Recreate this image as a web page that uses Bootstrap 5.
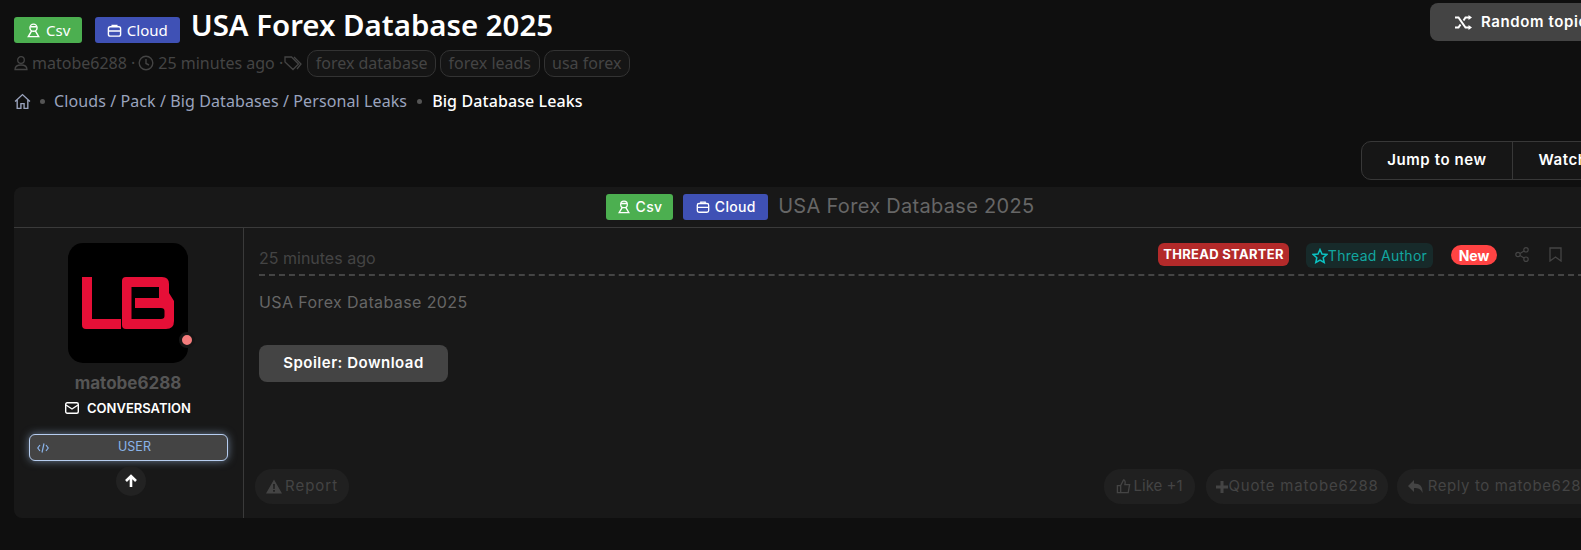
<!DOCTYPE html>
<html lang="en"><head><meta charset="utf-8"><title>USA Forex Database 2025</title>
<link href="https://cdn.jsdelivr.net/npm/bootstrap@5.3.0/dist/css/bootstrap.min.css" rel="stylesheet">
<style>
html,body{background:#0f0f0f;overflow:hidden;height:550px}
body{font-family:Inter,"Liberation Sans",sans-serif;color:#666}
.pagewrap{width:1628px;padding:3px 14px 0}
.topfont{font-family:"Noto Sans",sans-serif}
.pf-label{display:inline-flex;align-items:center;gap:5px;height:26px;border-radius:3px;color:#fff;font-size:15px;padding:0 12px;line-height:1}
.pf-green{background:#4caf50}.pf-blue{background:#3f51b5}
.pf-title{font-size:29.400px;font-weight:600;color:#fff;line-height:38px;margin:3px 0 0 11px}
.topbar{height:41px}
.topbar .pf-label{margin-top:14px}
.topbar .pf-blue{margin-left:12.500px}
.metaline{color:#444;font-size:16px;height:28px;margin-top:5px}
.tagpill{border:1px solid #333;border-radius:10px;padding:0 7.500px;height:27px;display:inline-flex;align-items:center;color:#444;background:#151515}
.clockglyph{margin-left:-1px}
.tagglyph{margin:0 -1px 0 -3px}
.crumbs{font-size:16px;letter-spacing:.1px;margin-top:12px;height:24px;color:#9aa3bd}
.crumbs .dotsep{width:5px;height:5px;border-radius:50%;background:#555;margin:0 1px}
.crumbs .dotsep.widedot{margin:0 2px}
.crumbs .cur{color:#fff;font-weight:500}
.randbtn{background:#444;color:#fff;font-weight:600;font-size:15px;letter-spacing:.6px;border-radius:8px;height:38px;width:184px;border:0;white-space:nowrap}
.jumpgroup{margin-top:28px;height:39px;border:1px solid #383838;border-radius:10px;width:253px;background:#161616;color:#fff;font-weight:600;font-size:15px;letter-spacing:.6px}
.jumpgroup>span{display:flex;align-items:center;justify-content:center;height:100%}
.jumpgroup>span:first-child{width:151px;border-right:1px solid #383838}
.threadbox{background:#181818;border-radius:8px;margin-top:7px;height:331px;overflow:hidden}
.threadhead{height:41px;border-bottom:1px solid #3a3a3a;gap:10px;padding-left:12px}
.threadhead h2{font-size:20px;letter-spacing:.3px;font-weight:400;color:#666;margin:0 0 2px}
.threadhead .pf-label{font-size:14px;letter-spacing:.3px;font-weight:500;padding:0 11px}
.threadhead .pf-blue{padding:0 12.500px}
.threadside{width:230px;border-right:1px solid #3a3a3a;height:290px;padding:15px 1px 0 0}
.avatarbox{width:120px;height:120px;border-radius:15px;background:#000}
.statusdot{position:absolute;right:-7px;bottom:15px;width:16px;height:16px;border-radius:50%;background:#f47c7c;border:3px solid #151515}
.authname{font-weight:700;font-size:17px;color:#555;margin-top:9px;line-height:22px}
.convo{color:#fff;font-weight:600;font-size:13px;margin-top:3px;line-height:22px}
.rolebtn{width:199px;height:27px;margin:15px 0 0 15px;border:1px solid #b6cdf0;border-radius:6px;background:#444;box-shadow:0 0 8px rgba(170,200,240,.55);color:#8ab4ea;font-size:12.500px;padding:0 7px}
.rolebtn span{flex:1;text-align:center}
.upcircle{width:30px;height:30px;border-radius:50%;background:#222;margin:5px 0 0 102px}
.threadmain{padding:15px 0 0 15px}
.posthead{height:33px;border-bottom:2px dashed #444}
.posthead .ago{font-size:16px;line-height:24px;color:#444;padding-top:3px}
.starter{background:#b32a2a;color:#fff;font-weight:700;font-size:13px;letter-spacing:.3px;border-radius:6px;height:23px;width:131px}
.authorpill{background:#172a2a;color:#12a7a0;font-size:14px;letter-spacing:.3px;border-radius:6px;height:25px;width:127px;margin-left:17px}
.newpill{background:#ff4343;color:#fff;font-weight:700;font-size:14px;border-radius:10px;height:20px;width:46px;margin-left:18px;margin-top:2px}
.shareglyph{margin:4px 0 0 18px}
.markglyph{margin:4px 52px 0 20px}
.postbody{font-size:16px;letter-spacing:.4px;color:#666;padding-top:15px;line-height:22px}
.spoilerbtn{background:#444;color:#fff;font-weight:600;font-size:15px;letter-spacing:.5px;border-radius:8px;width:189px;height:37px;border:0;margin-top:32px;display:block}
.postactions{margin:87px 12px 0 -4px;height:35px}
.actionpill{background:#202020;color:#444;font-size:15px;letter-spacing:.8px;height:35px;border-radius:17px;padding:0 11px;gap:3px;white-space:nowrap}
.actionpill.reportpill{letter-spacing:1px}
.actionpill.likepill{letter-spacing:0;padding:0 12px;margin-right:11px}
.actionpill.quotepill{gap:0;padding:0 9px;margin-right:9px}
.actionpill.replypill{letter-spacing:.6px;gap:5px}
</style></head><body>
<div class="pagewrap">
 <div class="d-flex justify-content-between align-items-start">
  <div>
   <div class="d-flex align-items-start topbar topfont">
    <span class="pf-label pf-green"><svg width="15" height="15" viewBox="0 0 16 16" fill="none" stroke="#fff" stroke-width="1.500"><circle cx="8" cy="5" r="3.800"/><path d="M6 8.500 2.500 14.500h11L10 8.500M4.500 4h7"/></svg>Csv</span>
    <span class="pf-label pf-blue"><svg width="15" height="15" viewBox="0 0 16 16" fill="none" stroke="#fff" stroke-width="1.500"><rect x="1.500" y="4" width="13" height="10" rx="2"/><path d="M1.500 8.500h13M5.500 4V2.500h5V4"/></svg>Cloud</span>
    <h1 class="pf-title">USA Forex Database 2025</h1>
   </div>
   <div class="metaline topfont d-flex align-items-center gap-1">
    <svg width="14" height="16" viewBox="0 0 14 16" fill="none" stroke="#444" stroke-width="1.300"><circle cx="7" cy="5" r="3.300"/><path d="M1 14.500c0-3.500 2-4.500 6-4.500s6 1 6 4.500z"/></svg>
    <span>matobe6288 ·</span>
    <svg class="clockglyph" width="16" height="16" viewBox="0 0 16 16" fill="none" stroke="#444" stroke-width="1.400"><circle cx="8" cy="8" r="6.800"/><path d="M8 4v4.500l3 1.500"/></svg>
    <span>25 minutes ago ·</span>
    <svg class="tagglyph" width="20" height="16" viewBox="0 0 20 16" fill="none" stroke="#444" stroke-width="1.300"><path d="M1 2h6.500l7 7-5.500 5.500-8-7.500zM10 2l7 7-4 5"/></svg>
    <span class="tagpill">forex database</span><span class="tagpill">forex leads</span><span class="tagpill">usa forex</span>
   </div>
   <div class="crumbs topfont d-flex align-items-center gap-2">
    <svg width="17" height="17" viewBox="0 0 16 16" fill="none" stroke="#9aa3bd" stroke-width="1.300"><path d="M1 8 8 1.500 15 8M3 6.500V14.500h3.500V10h3v4.500H13V6.500"/></svg>
    <span class="dotsep"></span><span>Clouds / Pack / Big Databases / Personal Leaks</span><span class="dotsep widedot"></span><span class="cur">Big Database Leaks</span>
   </div>
  </div>
  <button class="randbtn d-flex align-items-center gap-2 ps-4" type="button"><svg class="flex-shrink-0" width="19" height="15" viewBox="0 0 19 15" fill="none" stroke="#fff" stroke-width="2"><path d="M1 2.500h3.500l7 10H15M1 12.500h3.500l2-3M9.500 5.500l2-3H15"/><path d="M14.500 0 18 2.500 14.500 5zM14.500 10l3.500 2.500-3.500 2.500z" fill="#fff" stroke="none"/></svg>Random topic</button>
 </div>
 <div class="d-flex justify-content-end"><div class="jumpgroup d-flex"><span>Jump to new</span><span class="flex-grow-1">Watch</span></div></div>
 <div class="threadbox">
  <div class="threadhead d-flex align-items-center justify-content-center">
   <span class="pf-label pf-green"><svg width="14" height="14" viewBox="0 0 16 16" fill="none" stroke="#fff" stroke-width="1.500"><circle cx="8" cy="5" r="3.800"/><path d="M6 8.500 2.500 14.500h11L10 8.500M4.500 4h7"/></svg>Csv</span>
   <span class="pf-label pf-blue"><svg width="14" height="14" viewBox="0 0 16 16" fill="none" stroke="#fff" stroke-width="1.500"><rect x="1.500" y="4" width="13" height="10" rx="2"/><path d="M1.500 8.500h13M5.500 4V2.500h5V4"/></svg>Cloud</span>
   <h2>USA Forex Database 2025</h2>
  </div>
  <div class="d-flex">
   <div class="threadside text-center flex-shrink-0">
    <div class="avatarbox position-relative mx-auto">
     <svg width="120" height="120" viewBox="0 0 120 120"><path fill="#e60f37" fill-rule="evenodd" d="M14 34H24V76H53V86H18Q14 86 14 82ZM58 34H94Q101 34 101 41V50L106 58V78Q106 86 98 86H58Q54 86 54 82V38Q54 34 58 34ZM63.500 44V76H93Q96.500 76 96.500 73V68Q96.500 65 93 65H67V55H91V44Z"/></svg>
     <span class="statusdot"></span>
    </div>
    <div class="authname">matobe6288</div>
    <div class="convo d-flex justify-content-center align-items-center gap-2"><svg width="14" height="12" viewBox="0 0 14 12" fill="none" stroke="#fff" stroke-width="1.400"><rect x=".7" y=".7" width="12.600" height="10.600" rx="1.500"/><path d="M1 3l6 4 6-4"/></svg>CONVERSATION</div>
    <div class="rolebtn d-flex align-items-center"><svg width="12" height="10" viewBox="0 0 12 10" fill="none" stroke="#8ab4ea" stroke-width="1.200"><path d="M3 2 .8 5 3 8M9 2l2.200 3L9 8M7 .5 5 9.500"/></svg><span>USER</span></div>
    <div class="upcircle d-flex align-items-center justify-content-center"><svg width="14" height="14" viewBox="0 0 14 14" fill="none" stroke="#fff" stroke-width="2.600"><path d="M7 13V2M2 7l5-5 5 5"/></svg></div>
   </div>
   <div class="threadmain flex-grow-1">
    <div class="posthead d-flex align-items-start">
     <span class="ago me-auto">25 minutes ago</span>
     <span class="starter d-flex align-items-center justify-content-center">THREAD STARTER</span>
     <span class="authorpill d-flex align-items-center justify-content-center gap-0"><svg width="16" height="16" viewBox="0 0 16 16" fill="none" stroke="#0bc4c4" stroke-width="1.500"><path d="M8 1.500 10 6l4.800.5-3.600 3.200 1 4.800L8 12l-4.200 2.500 1-4.800L1.200 6.500 6 6z"/></svg>Thread Author</span>
     <span class="newpill d-flex align-items-center justify-content-center">New</span>
     <svg class="shareglyph" width="14" height="15" viewBox="0 0 14 15" fill="none" stroke="#444" stroke-width="1.200"><circle cx="11" cy="2.800" r="2.200"/><circle cx="3" cy="7.500" r="2.200"/><circle cx="11" cy="12.200" r="2.200"/><path d="M5 6.400 9 4M5 8.600l4 2.400"/></svg>
     <svg class="markglyph" width="13" height="15" viewBox="0 0 13 15" fill="none" stroke="#444" stroke-width="1.300"><path d="M1 1h11v13L6.500 10 1 14z"/></svg>
    </div>
    <div class="postbody">USA Forex Database 2025</div>
    <button class="spoilerbtn" type="button">Spoiler: Download</button>
    <div class="postactions d-flex">
     <span class="actionpill reportpill d-inline-flex align-items-center me-auto"><svg width="16" height="15" viewBox="0 0 16 15" fill="#444"><path fill-rule="evenodd" d="M8 .500 16 14.500H0ZM7.100 5h1.800l-.2 5H7.300ZM7.100 11h1.800v1.800H7.100Z"/></svg>Report</span>
     <span class="actionpill likepill d-inline-flex align-items-center"><svg width="15" height="15" viewBox="0 0 16 16" fill="none" stroke="#444" stroke-width="1.400"><path d="M5 7h-3.500v7.500H5zM5 7l3-6q2.500.5 1.500 5H14.500l-1.500 8.500H5"/></svg>Like +1</span>
     <span class="actionpill quotepill d-inline-flex align-items-center"><svg width="14" height="14" viewBox="0 0 14 14" fill="none" stroke="#444" stroke-width="3"><path d="M7 1v12M1 7h12"/></svg>Quote matobe6288</span>
     <span class="actionpill replypill d-inline-flex align-items-center"><svg width="15" height="13" viewBox="0 0 15 13" fill="#444"><path d="M6 0v3.500c6 0 9 3 8.500 9.500-1.500-4-4-5-8.500-5v4L0 6z"/></svg>Reply to matobe6288</span>
    </div>
   </div>
  </div>
 </div>
</div>
</body></html>
